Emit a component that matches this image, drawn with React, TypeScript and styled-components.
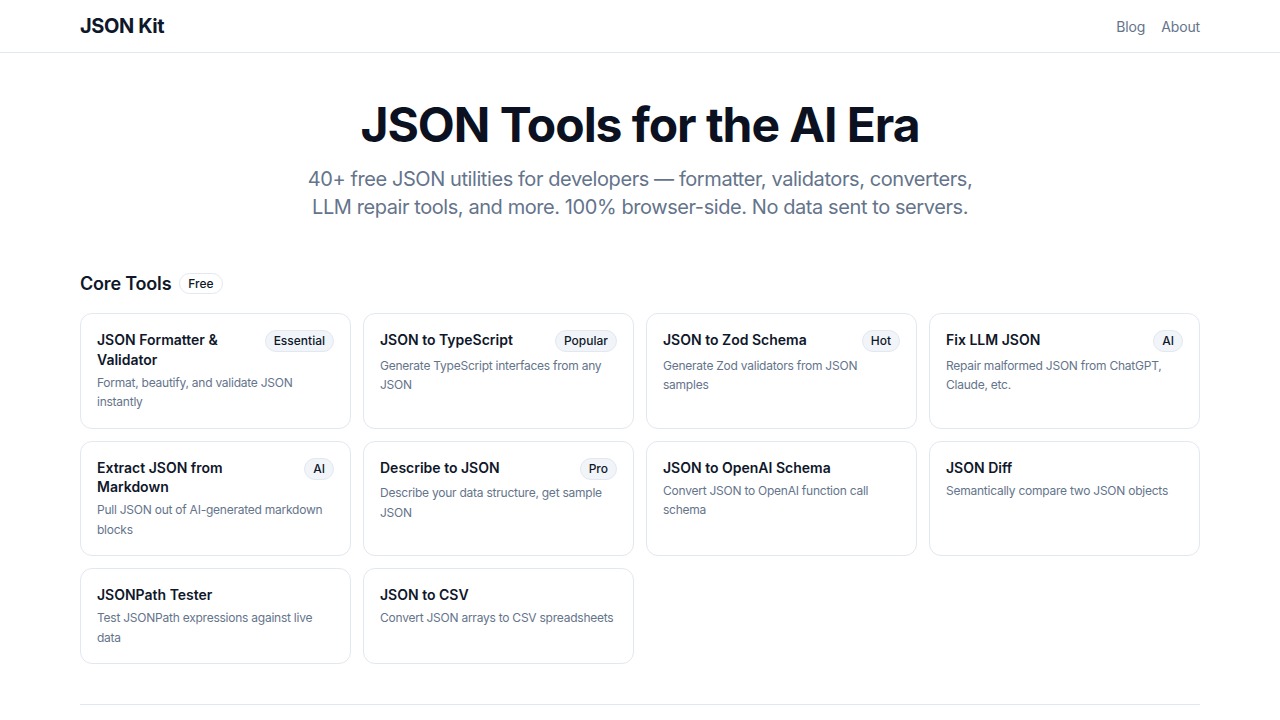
import React from 'react';
import styled, { createGlobalStyle } from 'styled-components';

interface ITool {
  title: string;
  description: string;
  badge?: string;
}

const tools: ITool[] = [
  { title: 'JSON Formatter & Validator', description: 'Format, beautify, and validate JSON instantly', badge: 'Essential' },
  { title: 'JSON to TypeScript', description: 'Generate TypeScript interfaces from any JSON', badge: 'Popular' },
  { title: 'JSON to Zod Schema', description: 'Generate Zod validators from JSON samples', badge: 'Hot' },
  { title: 'Fix LLM JSON', description: 'Repair malformed JSON from ChatGPT, Claude, etc.', badge: 'AI' },
  { title: 'Extract JSON from Markdown', description: 'Pull JSON out of AI-generated markdown blocks', badge: 'AI' },
  { title: 'Describe to JSON', description: 'Describe your data structure, get sample JSON', badge: 'Pro' },
  { title: 'JSON to OpenAI Schema', description: 'Convert JSON to OpenAI function call schema' },
  { title: 'JSON Diff', description: 'Semantically compare two JSON objects' },
  { title: 'JSONPath Tester', description: 'Test JSONPath expressions against live data' },
  { title: 'JSON to CSV', description: 'Convert JSON arrays to CSV spreadsheets' },
];

export default function App() {
  return (
    <>
      <GlobalStyle />
      <Header>
        <HeaderInner>
          <Logo>JSON Kit</Logo>
          <Nav>
            <NavLink href="#">Blog</NavLink>
            <NavLink href="#">About</NavLink>
          </Nav>
        </HeaderInner>
      </Header>
      <Main>
        <Hero>
          <Title>JSON Tools for the AI Era</Title>
          <Subtitle>
            40+ free JSON utilities for developers — formatter, validators, converters, LLM repair tools, and more. 100% browser-side. No data sent to servers.
          </Subtitle>
        </Hero>
        <Section>
          <SectionHeader>
            <SectionTitle>Core Tools</SectionTitle>
            <OutlineBadge>Free</OutlineBadge>
          </SectionHeader>
          <Grid>
            {tools.map((tool) => (
              <Card key={tool.title} href="#">
                <CardHead>
                  <CardTitle>{tool.title}</CardTitle>
                  {tool.badge && <Badge>{tool.badge}</Badge>}
                </CardHead>
                <CardText>{tool.description}</CardText>
              </Card>
            ))}
          </Grid>
        </Section>
        <Divider />
      </Main>
    </>
  );
}

const GlobalStyle = createGlobalStyle`
  * { box-sizing: border-box; }
  body {
    margin: 0;
    background: #ffffff;
    font-family: Inter, "Noto Sans", sans-serif;
    color: #0f172a;
    -webkit-font-smoothing: antialiased;
  }
`

const Header = styled.header`
  border-bottom: 1px solid #e2e8f0;
`
const HeaderInner = styled.div`
  max-width: 1120px;
  margin: 0 auto;
  height: 52px;
  display: flex;
  align-items: center;
  justify-content: space-between;
`
const Logo = styled.div`
  font-size: 20px;
  font-weight: 700;
  letter-spacing: -0.02em;
  color: #0f172a;
`
const Nav = styled.nav`
  display: flex;
  gap: 16px;
`
const NavLink = styled.a`
  font-size: 14px;
  letter-spacing: -0.01em;
  color: #64748b;
  text-decoration: none;
`
const Main = styled.main`
  max-width: 1120px;
  margin: 0 auto;
`
const Hero = styled.section`
  padding-top: 48px;
  display: flex;
  flex-direction: column;
  align-items: center;
  text-align: center;
`
const Title = styled.h1`
  margin: 0;
  font-size: 48px;
  line-height: 48px;
  font-weight: 700;
  letter-spacing: -0.022em;
  color: #0b1120;
`
const Subtitle = styled.p`
  margin: 16px 0 0;
  max-width: 672px;
  font-size: 20px;
  line-height: 28px;
  letter-spacing: -0.021em;
  color: #64748b;
`
const Section = styled.section`
  margin-top: 48px;
`
const SectionHeader = styled.div`
  display: flex;
  align-items: center;
  gap: 8px;
  height: 28px;
  margin-bottom: 16px;
`
const SectionTitle = styled.h2`
  margin: 0;
  font-size: 18px;
  font-weight: 600;
  letter-spacing: -0.01em;
`
const OutlineBadge = styled.span`
  font-size: 12px;
  font-weight: 500;
  padding: 2px 8px;
  border: 1px solid #e2e8f0;
  border-radius: 999px;
  color: #0f172a;
`
const Grid = styled.div`
  display: grid;
  grid-template-columns: repeat(4, 1fr);
  gap: 12px;
`
const Card = styled.a`
  display: block;
  padding: 16px;
  border: 1px solid #e2e8f0;
  border-radius: 12px;
  text-decoration: none;
  color: inherit;
  background: #fff;
`
const CardHead = styled.div`
  display: flex;
  align-items: flex-start;
  justify-content: space-between;
  gap: 8px;
`
const CardTitle = styled.h3`
  margin: 0;
  font-size: 14px;
  line-height: 19.5px;
  font-weight: 600;
  color: #0f172a;
`
const Badge = styled.span`
  flex-shrink: 0;
  font-size: 12px;
  line-height: 20px;
  font-weight: 500;
  padding: 0 8px;
  border: 1px solid #e2e8f0;
  background: #f1f5f9;
  border-radius: 999px;
  color: #0f172a;
`
const CardText = styled.p`
  margin: 3.5px 0 0;
  font-size: 12px;
  line-height: 19.5px;
  letter-spacing: -0.02em;
  color: #64748b;
`
const Divider = styled.hr`
  margin: 40px 0 0;
  border: 0;
  border-top: 1px solid #e2e8f0;
`
